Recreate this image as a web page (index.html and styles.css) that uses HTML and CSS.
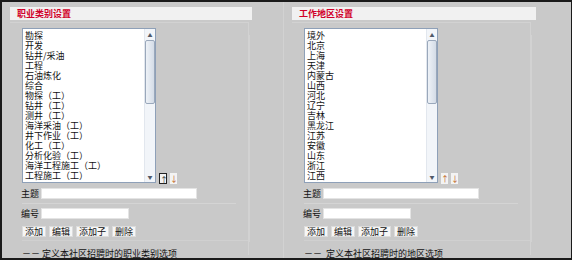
FILE: index.html
```html
<!DOCTYPE html>
<html>
<head>
	<title>职业类别 / 工作地区设置</title>
	<link rel="stylesheet" href="styles.css">
</head>
<body>
	<div class="frame">
		<div class="panel">
			<div class="title">职业类别设置</div>
			<div class="body">
				<div class="list-row">
					<div class="listbox">
						<div class="items">
							<div>勘探</div>
							<div>开发</div>
							<div>钻井/采油</div>
							<div>工程</div>
							<div>石油炼化</div>
							<div>综合</div>
							<div>物探（工）</div>
							<div>钻井（工）</div>
							<div>测井（工）</div>
							<div>海洋采油（工）</div>
							<div>井下作业（工）</div>
							<div>化工（工）</div>
							<div>分析化验（工）</div>
							<div>海洋工程施工（工）</div>
							<div>工程施工（工）</div>
						</div>
						<div class="scrollbar">
							<div class="sb-btn">▲</div>
							<div class="sb-thumb"></div>
							<div class="sb-fill"></div>
							<div class="sb-btn">▼</div>
						</div>
					</div>
					<span class="arrow arrow-on">↑</span>
					<span class="arrow">↓</span>
				</div>
				<div class="field field-main">
					<label>主题</label>
					<input type="text" class="input-long">
				</div>
				<div class="field field-code">
					<label>编号</label>
					<input type="text" class="input-short">
				</div>
				<div class="buttons">
					<button>添加</button>
					<button>编辑</button>
					<button>添加子</button>
					<button>删除</button>
				</div>
				<div class="note">－－ 定义本社区招聘时的职业类别选项</div>
			</div>
		</div>

		<div class="panel panel-right">
			<div class="title">工作地区设置</div>
			<div class="body">
				<div class="list-row">
					<div class="listbox">
						<div class="items">
							<div>境外</div>
							<div>北京</div>
							<div>上海</div>
							<div>天津</div>
							<div>内蒙古</div>
							<div>山西</div>
							<div>河北</div>
							<div>辽宁</div>
							<div>吉林</div>
							<div>黑龙江</div>
							<div>江苏</div>
							<div>安徽</div>
							<div>山东</div>
							<div>浙江</div>
							<div>江西</div>
						</div>
						<div class="scrollbar">
							<div class="sb-btn">▲</div>
							<div class="sb-thumb"></div>
							<div class="sb-fill"></div>
							<div class="sb-btn">▼</div>
						</div>
					</div>
					<span class="arrow">↑</span>
					<span class="arrow">↓</span>
				</div>
				<div class="field field-main">
					<label>主题</label>
					<input type="text" class="input-long">
				</div>
				<div class="field field-code">
					<label>编号</label>
					<input type="text" class="input-short">
				</div>
				<div class="buttons">
					<button>添加</button>
					<button>编辑</button>
					<button>添加子</button>
					<button>删除</button>
				</div>
				<div class="note">－－&nbsp; 定义本社区招聘时的地区选项</div>
			</div>
		</div>
	</div>
</body>
</html>
```

FILE: styles.css
```css
body {
	margin: 0;
	background: #fff;
	font-family: "Noto Sans CJK SC", "DejaVu Sans", sans-serif;
	font-size: 9px;
	color: #111;
}

.frame {
	width: 572px;
	height: 260px;
	box-sizing: border-box;
	border: 2px solid #1a1a1a;
	border-right-width: 1px;
	background: #c9c9c9;
	display: flex;
}

.panel {
	width: 282px;
	height: 100%;
	box-sizing: border-box;
	border-right: 1px solid #d2d2d2;
	padding-left: 8px;
	padding-top: 5px;
}

.panel-right {
	width: 287px;
	border-right: none;
	padding-left: 8px;
}

.title {
	width: 242px;
	height: 13px;
	box-sizing: border-box;
	background: #f1f1f1;
	color: #d1002a;
	font-weight: bold;
	font-size: 9px;
	line-height: 13px;
	padding-left: 7px;
}

.panel-right .title {
	width: 244px;
}

.body {
	width: 226px;
	height: 232px;
	margin-top: 2px;
	padding-left: 12px;
	border-top: 1px solid #d2d2d2;
	border-right: 1px solid #d2d2d2;
	box-shadow: 14px 0 0 -13px #d2d2d2;
}

.list-row {
	display: flex;
	align-items: flex-end;
	margin-top: 5px;
}

.listbox {
	width: 134px;
	height: 155px;
	box-sizing: border-box;
	border: 1px solid #8ea0b8;
	background: #fff;
	display: flex;
}

.items {
	flex: 1;
	padding: 2px 0 0 2px;
	line-height: 10px;
	white-space: nowrap;
	overflow: hidden;
}

.scrollbar {
	width: 10px;
	display: flex;
	flex-direction: column;
	background: #f2f5f9;
	border-left: 1px solid #e2e7ee;
}

.sb-btn {
	height: 11px;
	font-size: 5px;
	line-height: 11px;
	text-align: center;
	color: #505a68;
}

.sb-thumb {
	height: 64px;
	box-sizing: border-box;
	border: 1px solid #9aa8bb;
	border-radius: 2px;
	background: linear-gradient(to right, #eef2f7, #d4dce7);
}

.sb-fill {
	flex: 1;
}

.arrow {
	width: 7px;
	height: 11px;
	box-sizing: border-box;
	margin-left: 3px;
	margin-bottom: -1px;
	background: #f3f3f3;
	color: #c06020;
	font-size: 8px;
	line-height: 11px;
	text-align: center;
}

.arrow-on {
	border: 1px solid #222;
	width: 8px;
	color: #333;
}

.field {
	display: flex;
	align-items: center;
	height: 11px;
}

.field label {
	width: 20px;
	margin-left: -1px;
}

.field-main {
	margin-top: 5px;
	padding-bottom: 4px;
	border-bottom: 1px solid #d4d4d4;
	width: 214px;
}

.field-code {
	margin-top: 4px;
}

input[type="text"] {
	height: 11px;
	box-sizing: border-box;
	border: 1px solid #e4e4e4;
	background: #fff;
	padding: 0;
}

.input-long {
	width: 156px;
}

.input-short {
	width: 88px;
}

.buttons {
	display: flex;
	gap: 3px;
	margin-top: 7px;
	padding-bottom: 3px;
	border-bottom: 1px solid #d0d0d0;
}

button {
	height: 11px;
	padding: 0 2px;
	border: 1px solid #dcdcdc;
	background: #f6f6f6;
	font-family: "Noto Sans CJK SC", sans-serif;
	font-size: 9px;
	line-height: 9px;
	color: #111;
}

.note {
	margin-top: 8px;
	line-height: 10px;
}
```
